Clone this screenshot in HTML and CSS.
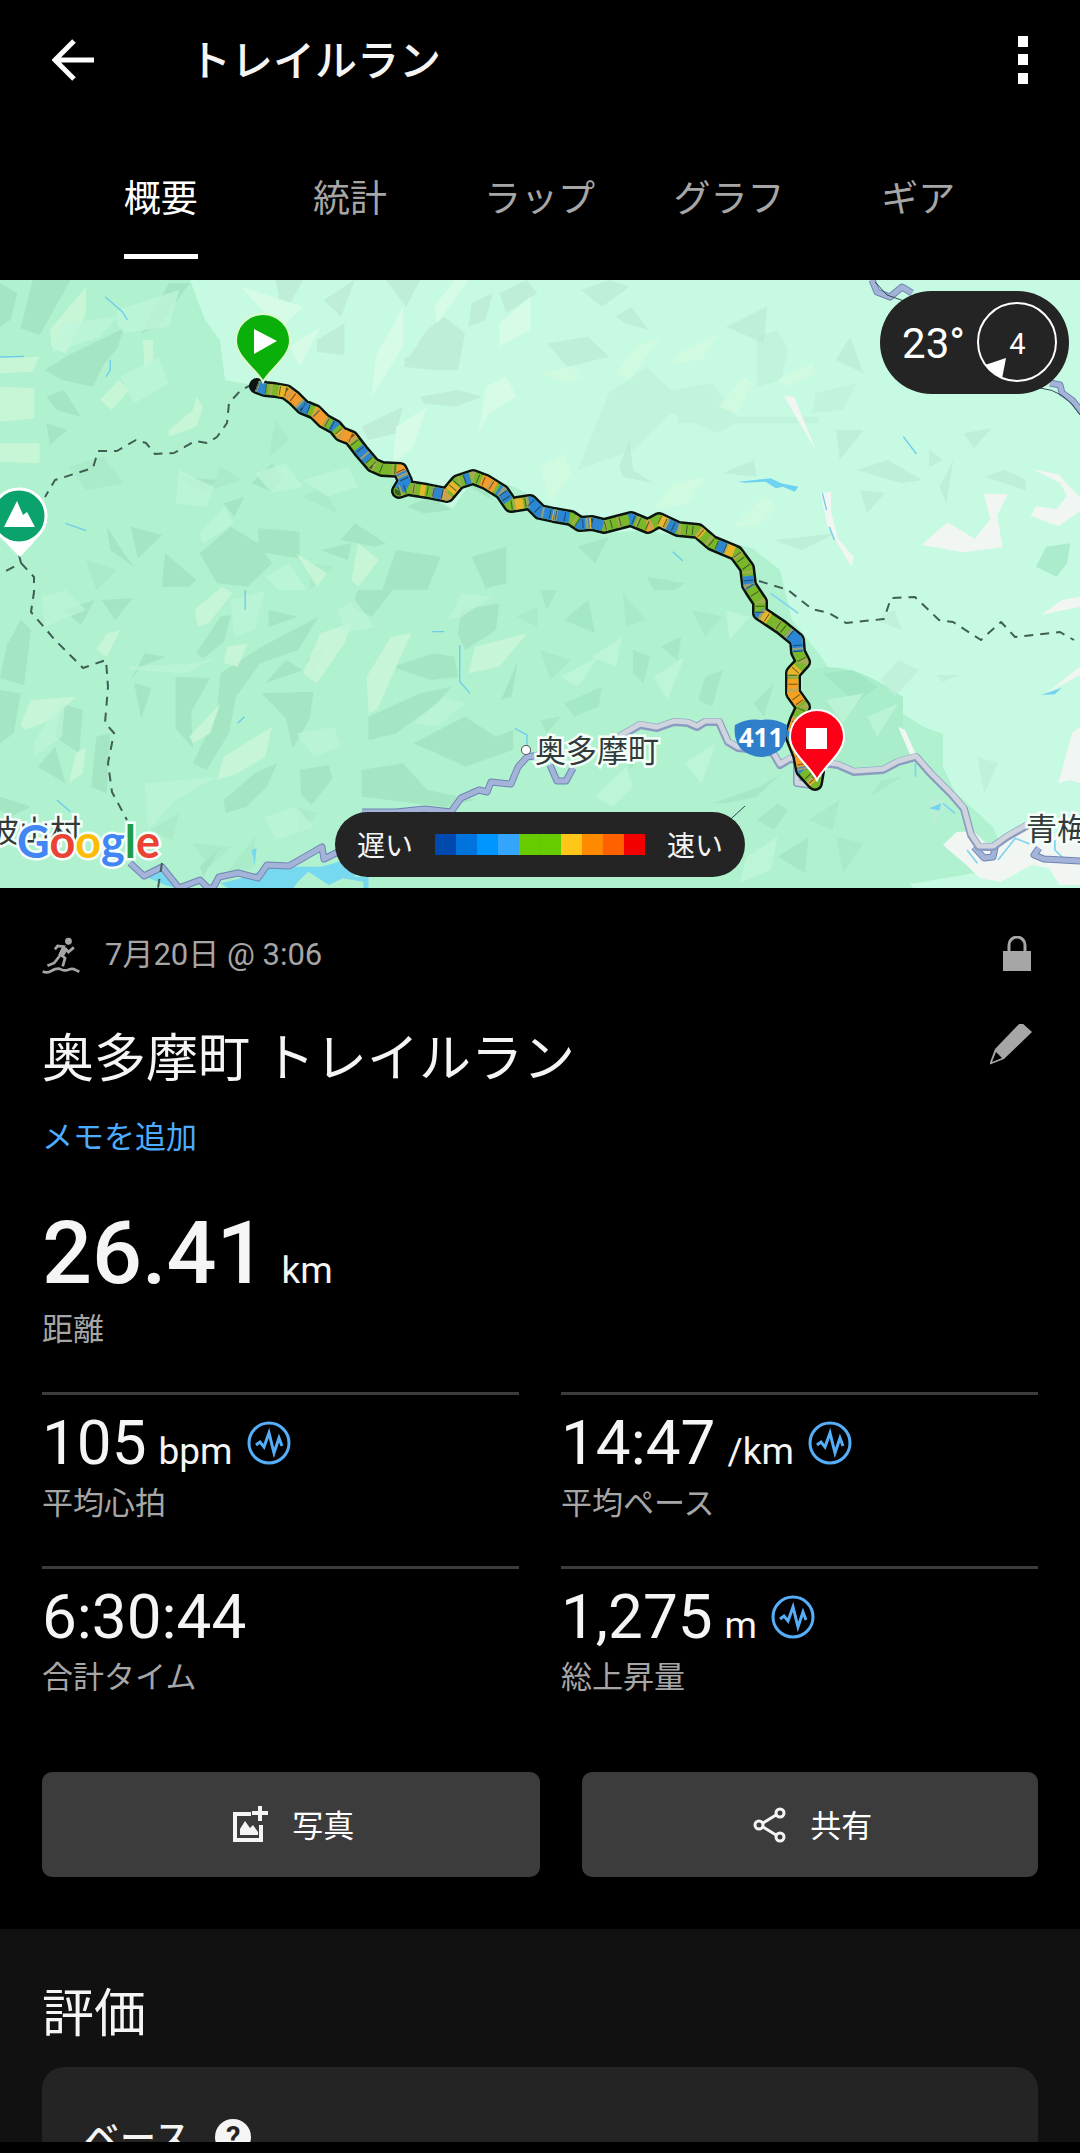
FILE: index.html
```html
<!DOCTYPE html>
<html lang="ja">
<head>
    <meta charset="UTF-8">
    <meta name="viewport" content="width=device-width, initial-scale=1.0">
    <title>トレイルラン</title>
    <link rel="stylesheet" href="styles.css">
</head>
<body>
    <!-- Iconos compartidos -->
    <svg class="sprite" aria-hidden="true">
        <symbol id="icon-pulse" viewBox="0 0 44 44">
            <circle cx="22" cy="22" r="20" fill="none" stroke="currentColor" stroke-width="3"/>
            <path d="M9 24l4-3 4 5 5-14 5 20 5-15 3 8" fill="none" stroke="currentColor" stroke-width="3"/>
        </symbol>
    </svg>

    <main class="screen">
        <header class="header">
            <button class="icon-button" aria-label="戻る">
                <svg width="42" height="42" viewBox="0 0 42 42"><path d="M22 2L3 21l19 19M3 21h39" fill="none" stroke="#fff" stroke-width="5"/></svg>
            </button>
            <h1>トレイルラン</h1>
            <button class="icon-button" aria-label="メニュー">
                <svg width="10" height="48" viewBox="0 0 10 48"><path d="M0 0h10v11H0zM0 18h10v11H0zM0 37h10v11H0z" fill="#fff"/></svg>
            </button>
        </header>

        <nav class="tabs">
            <a href="#" class="tab active"><span>概要</span></a>
            <a href="#" class="tab"><span>統計</span></a>
            <a href="#" class="tab"><span>ラップ</span></a>
            <a href="#" class="tab"><span>グラフ</span></a>
            <a href="#" class="tab"><span>ギア</span></a>
        </nav>

        <!-- Mapa -->
        <div class="map">
            <svg class="map-image" viewBox="0 0 1080 608" role="img" aria-label="ルートマップ">
                <rect width="1080" height="608" fill="#b0f1cf"/>
                <path fill="#c7fae2" d="M190 0l15 40 15 20 5 40 38 7 70 35 40 48 30 14 50 24 24-34 40 14 45 26 40 18 100 4 50 12 28 22 12 50 28 35 20 30 8 25 21-5 31 7 24 15 19 7v33l12 25 38 35 9 20-9 23-83 14 32 41h178V0z"/>
                <path fill="#a9edca" d="M803 392q26-10 57 1 24 10 43 24v33l12 25-19 5-15 8-29 2-29-7-20-33z"/>

                <!-- Relieve, cuadrante superior izquierdo -->
                <g transform="scale(.3444 .3333)">
                    <g fill="#9fe1bf" opacity=".7">
                        <path d="M95 0h110l-90 165-55-20zM0 10l50 30-20 80-30 20zM130 270l70-45 160-80-20 60-40 50-30 65-90-20zM135 350l50-20 50 80-70-20zM135 430l60 20-50 45zM490 10h60l-90 130-50 20zM520 590l110 10-40 40zM730 610l60-60 30 45-30 40zM650 670l60-20-30 60zM380 740l90 25-70 70zM310 740l50 80 30 40-70-50zM580 820l90-80 80 50 40 60-70 70-90-10zM750 745l120 10v80l-120-20zM480 820l90 80-20 20h-80zM1150 810l130 20-40 100h-130zM1030 730l90 60-30 10-100-20zM930 810l90-20-10 50zM1370 830l100-30v110l-60 15zM1330 600l40-30 60 90zM1180 680l70-30 60 40-80 10z"/>
                        <path d="M200 560l100-30 60 80-110 20zM880 650l60-30 40 80zM800 420l40 60-60 50zM640 560l60 40-90 30zM250 840l90 30-60 60zM900 850l70 10-70 70z" opacity=".5"/>
                    </g>
                    <g fill="#cbf7d8" opacity=".85">
                        <path d="M145 150L250 20v80l-60 120-40-20zM0 235l115-5-20 45-95 5zM0 320l100 5v90l-100 10zM0 490h115v60l-115-5zM415 180h30v60l-25 30zM290 360l55-60 30 30-50 60zM490 450l70-60 10-40 20 30-20 60-80 30zM1040 790l60 50-60 80-20-20zM860 820l90 60-30 40z"/>
                    </g>
                    <g fill="#c1f6dc">
                        <path d="M340 90l180-60-30 110-130 20-20-30zM520 570l100 50-20 60-90-10zM740 580l90-30 50 70-90 20zM580 760l70-80 30 50-90 60zM770 890l70-40 50 80h-80zM880 600l130-40 30 60-90 30zM180 130l160-20-50 60-140 50zM350 290l110-60 30 80-100 60z" opacity=".7"/>
                    </g>
                    <g fill="#bae8d3">
                        <path d="M800 0h80l-60 110zM920 180l80-50v95l-80-10zM940 60l90-60-40 110zM1240 150l50-40 60 50-20 110h-70l-90-10zM1170 240l60-40 50 30-100 20zM1220 350l110-20 70 20-80 30-90-10zM1450 40l80-40 30 40-90 60zM1050 440l120-60-20 80-80 20zM1370 70l60-30-20 80-50 20zM1120 0h100l-40 80z" opacity=".7"/>
                    </g>
                    <g fill="#d6fbe6">
                        <path d="M700 20l180 60-60 60-50-40zM1090 230l80-150v120l-90 150zM1410 320l60-30 30 60-80 50-30 60zM1150 440l90-60-40 120-60 50zM840 200l90-60-60 120zM1450 130l90-80v100l-90 50zM1260 80l60-80h40l-90 130z"/>
                    </g>
                    <path fill="none" stroke="#6fcdea" stroke-width="4" d="M305 50l50 45 15 25M0 231l70-2M320 240v30l-12 20M190 730l60 22"/>
                </g>
                <!-- Cuadrante superior derecho -->
                <g transform="translate(540 0) scale(.3444 .3333)">
                    <g fill="#baecd6">
                        <path d="M220 110l45-30 50 70-70-20zM120 30l60 50 80-60-60-20zM20 190l120-20 60 60-120 30zM540 140l120-60-10 110zM860 240l40-70 40 110zM1230 460l80-15-50 60zM230 560l30-80 10 90 60 40-90-20zM530 580l90-40 10 50zM680 780l180-20-100 50zM920 570l90-30 100 60-60 10zM1160 620l40-80-20 130zM1290 590l60-20 60 30v30zM300 900l90-20 60 50h-90zM860 450h80l-70 90zM930 630l70 10-50 60zM1130 510l40 30-40 20z" opacity=".75"/>
                        <path d="M200 340l110-80 70 70 120-20 80 110-60 40-140-60-110 110-160 60zM400 410h410v20H400zM630 170l60-20 30 60-20 90-70 20zM800 340l120-30-40 80-90 10z" opacity=".4"/>
                    </g>
                    <g fill="#d5fbe0">
                        <path d="M520 380l70-90 30 20-50 90zM690 300l100-50 10 30-90 40zM220 280l60-80 70-30-90 130zM0 280l90-20 30 30-40 20zM400 220l120-60-50 80-90 10zM0 560l70-40 20 60-60 90zM330 690l60-80 90-20-50 80zM560 740l90-90 40 30-60 60z" opacity=".7"/>
                    </g>
                    <path fill="#b0f1cf" d="M0 730l180 30 130-10 180 40 70 40 60 100H0z"/>
                    <path fill="#9fe1bf" d="M310 890l110 20-30 20h-60zM110 800l90-30-40 80z" opacity=".6"/>
                    <path fill="#abeccd" d="M1470 800l70-10-10 60-30 40-60-30z"/>
                    <!-- Zonas urbanas -->
                    <path fill="#f1f6f3" d="M708 348l30 2 65 165zM815 640l30-5v60l20 80 45 55-5 30-70-120zM1108 795l75-68 80 50 45-60-20-75h70l-30 65 15 95-115 15zM1430 568l75 15 45 50 20 20v40l-65 45-80-30 15-30 60 10 30-40-20-40z"/>
                    <path fill="#6fd2f1" d="M575 605l95-10 30 15 50 10-10 15-35-15-20 5-30-20-60 3z"/>
                    <path fill="none" stroke="#6fcdea" stroke-width="4" d="M1055 470l38 52M820 640l12 50M840 740l15 40M385 815l30 28"/>
                </g>
                <!-- Cuadrante inferior izquierdo -->
                <g transform="translate(0 310) scale(.3444 .3333)">
                    <g fill="#9fe1bf" opacity=".7">
                        <path d="M60 90l30 30-20 165-70-20 20-100zM0 300l60 10-20 120-40 30zM180 340l60 20-10 130-70-50zM185 60l90-30-40 75zM295 30l90-5-50 65zM280 440l40-10-10 180-45-20zM110 530l50-60 30 110zM380 270l40-80 60 10-70 30zM510 260l100 5-55 100 5 110-50-60zM390 280l50 15-30 90zM570 190l70-110 30-5-20 80-60 50zM640 250l120-80 165-90-60 100-110 40-70 100-20 110-65 110-40-20 70-150zM760 310l150-5-10 80-50 90-20-90zM780 60l85 20-85 30zM770 280l60-70 50 30zM650 630l90-80 65-30-30 70-60 60-60 20zM870 540l85-15 10 40-60 80-30-30zM1050 540l120-20 70 80 140 30-90 20-240-30zM1070 380l150-70 90-20-40 50-120 90-80 20zM1200 460l150-80 90 60 50-20v60l-140 50-60-30zM1140 230l120-40 60 10 10 60-80 10zM1340 60l110-20-10 80-90 60-20-50zM1040 0h100l-60 80-60-30zM890 210l60-50-40 80zM1455 330l50-120-20 110zM0 620l90 30-60 30-30-20zM580 830l60-60-50 90z"/>
                        <path d="M560 760l110 10-60 60zM650 860l90-120v90zM860 650l60 20-50 60zM440 720l80-50-20 80zM1500 80l60-30v60zM1240 660l80-20-30 40z" opacity=".5"/>
                    </g>
                    <g fill="#cdf6d8">
                        <path d="M565 60l80-70 30 20-70 90-30 10zM880 250l50-120 90-30-20 60-80 120zM1070 370l-5-110 70-120 60-10-40 90-60 140zM650 500l140-90-20 90-80 50-60 20zM60 400l30-70 130-10-70 70-80 30zM280 180l30-50 40-10-40 80zM1380 170l150-40-80 100-90 20zM660 170l60-10-30 70-40-10zM200 580l20-90 30-20-10 80zM550 440l90-100-30 90-50 30z" opacity=".8"/>
                    </g>
                    <g fill="#bef5d9">
                        <path d="M120 20l70-20 60 60-120 50zM370 230l200-10 60-20-90 50-160-10zM420 580l210-20-120 70-80 90zM670 30l100-30-30 120-60 20zM860 430l110-20 20 60-80 30zM1200 400l90-80 60 20-80 70zM770 680l90-30 50 60-110 40zM100 450l90-130-10 120-80 60zM1300 90l40-80 90 10-90 60zM980 60l50-30 60 80-90 20z" opacity=".7"/>
                    </g>
                    <path fill="#76d9f0" d="M640 880l80-20 60-30h150l40-10 50-20 10 60h40v45h-15v-30l-60-10-40 20-60-40-30 30-20 30-90-10-60 20zM410 855l50-20 50 60-30-10zM730 780l15-5-5 50z"/>
                    <path fill="none" stroke="#6fcdea" stroke-width="4" d="M712 0v60M1335 165v110l30 35M1255 125h35M690 400l20-20M165 630l40 35M1495 415l35 20v30"/>
                </g>
                <!-- Cuadrante inferior derecho -->
                <g transform="translate(540 310) scale(.3444 .3333)">
                    <g fill="#9fe3c1">
                        <path d="M70 90l70-60 20 100zM0 0h50l-30 60zM350 170l60-30-10 70zM480 260l50-20-30 110-40-20zM70 340l110-50-10 60-70 30zM0 390l60-10-40 50zM620 340l60-60-30 100zM270 180l50 20-20 80-30-30zM500 640l140-50 60-40-70 70-90 20zM630 690l60-50 30 20-40 60zM690 800l90-60-10 110zM820 250l90-10 70 50-60 50z" opacity=".6"/>
                        <path d="M240 10l70 80-60 20zM440 60l90 20-50 60zM230 430l90 40-60 70zM780 690l90-60-20 90zM0 180l90 30-60 60zM860 740l80 20-60 90zM960 620l90-60-60 10z" opacity=".4"/>
                    </g>
                    <g fill="#c3f6da">
                        <path d="M150 200l90-60-20 90zM160 620l90-90 20 60-60 60zM420 520l90-60-40 120zM540 60l70 20-60 70zM600 800l90-60-20 100-90 40zM830 330l110-20-60 90zM950 380l90-40-60 100zM330 260l90-60-50 130zM60 260l110-60-60 90z" opacity=".7"/>
                    </g>
                    <path fill="#bdeed8" d="M990 270l50-60 60 30-70 80zM1150 255h70l-50 20zM970 90l60-30 20 60zM1270 500l60 20-40 90zM1130 620l60 20-50 60z" opacity=".7"/>
                    <path fill="#f1f6f3" d="M1170 765l40-40h50l40 40 60-20 50-40 60 40 98-20v160h-60l-30-50-50-10-90 50-60-10-40-40zM1505 580l40-150 23-20v170l-30-10zM1455 75l60-45 53-10v30zM1470 310l98-80v25zM1040 410l20 10 30 70-15 5z"/>
                    <path fill="none" stroke="#7fd4ee" stroke-width="5" d="M670 10l80 60M1090 520v40M1240 780l30 40M1330 810l50-65 50 20M1495 750v30l30 30M1170 640l35 30"/>
                    <path fill="#74d4ef" d="M1130 655l35-15-5 22zM1455 315l60-22-20 20z"/>
                </g>

                <!-- Carreteras -->
                <g fill="none" stroke-linejoin="round">
                    <path stroke="#6f84b4" stroke-width="7" d="M130 583l14 13 18-9 17 21 21-8 8 8h5l6-11 19-4 20 5 9-13 22 1 33-19 2 12 16-8M362 532h34l29-3 26 3 10-14 18-8 8 2 4-10 20 2 7-17 9-10 12-2M550 485l7 16h9l7-13M872 0l5 12 13 5 12-10 10 6M1050 103l10 2 2 8 10 7 10 12M974 567l10 11 9-1 3-14M1039 568l-5 7 10 4 36 2"/>
                    <path stroke="#a3b4d8" stroke-width="5" d="M130 583l14 13 18-9 17 21 21-8 8 8h5l6-11 19-4 20 5 9-13 22 1 33-19 2 12 16-8M362 532h34l29-3 26 3 10-14 18-8 8 2 4-10 20 2 7-17 9-10 12-2M550 485l7 16h9l7-13M872 0l5 12 13 5 12-10 10 6M1050 103l10 2 2 8 10 7 10 12M974 567l10 11 9-1 3-14M1039 568l-5 7 10 4 36 2"/>
                    <path stroke="#8c9cc0" stroke-width="8" d="M619 457l21-12 17 3 17-6 14 1 9 4 8-5h14l9 20 10 6 19 2 16 3 7 12 10-6 48 6 16 7 29-2 15-8 18-5 15 17 21 21 12 14 7 26 8 12h14l14-10 21-12M797 480v23l15 2"/>
                    <path stroke="#cfd4df" stroke-width="5" d="M619 456l21-12 17 3 17-6 14 1 9 4 8-5h14l9 20 10 6 19 2 16 3 7 12 10-6 48 6 16 7 29-2 15-8 18-5 15 17 21 21 12 14 7 26 8 12h14l14-10 21-12M797 480v23l15 2"/>
                    <path stroke="#2f4b55" stroke-width="1" d="M875 2l12 13 17 6M1040 108q25 2 40 27M722 547l23-21"/>
                    <path stroke="#3f5e55" stroke-width="2" stroke-dasharray="9 7" d="M253 104l-12 6-12 13-2 20-10 14-10 6-12-2-21 12-19 1-9-11-10-3-19 11H98l-5 17-38 12-10 17M19 275l2 8-21 11M21 283l13 14v15l-3 20 24 28 28 28 23-8 2 27-3 36 9 10-6 30 4 29 15 28M162 583l-4 25M759 301l29 9 24 19 17 4 17 10 38-4 7-21 24-1 24 23 14 2 28 18 20-18 14 15 45-5 14 8"/>
                </g>

                <!-- Ruta -->
                <defs>
                    <path id="route" d="M257 106l8 3 10 1 11 2 8 6 9 9 12 5 9 9 11 6 6 7 10 4 10 13 12 14 9 4 18 1 5 11-6 10 9-3 19 3 20 4 11-13 15-5 13 5 16 10 9 13 19-3 10 10 14 3 17 3 9 6 12-1 12 3 27-7 17 7 11-6 19 9 20 2 14 12 24 10 11 15 2 17 3 5 8 12v11l21 14 16 13 1 12 5 10-10 11v20l10 14-6 13-5 15 8 20 3 15 12 13 2-12"/>
                </defs>
                <g fill="none" stroke-linejoin="round">
                    <use href="#route" stroke="#0b1410" stroke-width="16" stroke-linecap="round"/>
                    <use href="#route" stroke="#79b82a" stroke-width="11"/>
                    <use href="#route" stroke="#2f86cf" stroke-width="11" stroke-dasharray="9 38 12 27 6 31 16 45"/>
                    <use href="#route" stroke="#e8b62a" stroke-width="11" stroke-dasharray="0 22 8 34 5 27 9 50"/>
                    <use href="#route" stroke="#f59a2c" stroke-width="11" stroke-dasharray="0 30 17 18 14 20 16 55 12 60 6 40 16 170 5 230"/>
                    <use href="#route" stroke="#2a86d6" stroke-width="11" stroke-dasharray="0 176 20 148 26 5 16 10 12 260 24 300"/>
                    <use href="#route" stroke="#f5a020" stroke-width="11" stroke-dasharray="0 729 26 900"/>
                    <use href="#route" stroke="#b3a85f" stroke-width="11" stroke-dasharray="2 11 3 17" opacity=".8"/>
                    <use href="#route" stroke="#10241c" stroke-width="9" stroke-dasharray="1 8 1 13 1 5" opacity=".6"/>
                </g>

                <!-- Etiquetas del mapa -->
                <g class="map-label">
                    <circle cx="526" cy="470" r="4" fill="#fff" stroke="#555" stroke-width="2"/>
                    <text x="535" y="482">奥多摩町</text>
                    <text x="1026" y="560">青梅</text>
                    <text x="-12" y="562">波山村</text>
                </g>
                <path fill="#2f7fcb" d="M735 445q13-7 26-5 13-2 26 5 1 16-7 25-10 7-19 7-10 0-20-8-8-10-6-24z"/>
                <text class="road-number" x="761" y="467">411</text>

                <!-- Marcadores -->
                <path fill="#fff" d="M-9 237a28 28 0 1 1 56 0c0 13-14 26-27 40-14-14-29-27-29-40z"/>
                <circle cx="19" cy="236" r="27" fill="#0ba36c" stroke="#fff" stroke-width="3"/>
                <path fill="#fff" d="M4 247l13-26 6 14 4-3 8 15z"/>
                <path fill="#0aaf0a" stroke="#dcfacb" stroke-width="2" d="M263 102c-6-12-27-25-27-41a27 27 0 0 1 54 0c0 16-21 29-27 41z"/>
                <path fill="#fff" d="M254 49v25l23-13z"/>
                <path fill="#fb0017" stroke="#fff" stroke-width="2" d="M817 500c-7-14-27-27-27-43a27 27 0 0 1 54 0c0 16-20 29-27 43z"/>
                <path fill="#fff" d="M806 448h21v21h-21z"/>

                <text class="google" x="17" y="578"><tspan fill="#4285f4">G</tspan><tspan fill="#ea4335">o</tspan><tspan fill="#fbbc05">o</tspan><tspan fill="#4285f4">g</tspan><tspan fill="#1e9c48">l</tspan><tspan fill="#ea4335">e</tspan></text>
            </svg>

            <div class="weather">
                <span class="temperature">23°</span>
                <div class="wind">
                    <svg viewBox="0 0 81 81">
                        <circle cx="40" cy="40" r="39" fill="none" stroke="#fff" stroke-width="2"/>
                        <path d="M8 63l21-7-4 21z" fill="#fff"/>
                    </svg>
                    <span>4</span>
                </div>
            </div>

            <div class="legend">
                <span>遅い</span>
                <div class="scale">
                    <i class="c1"></i><i class="c2"></i><i class="c3"></i><i class="c4"></i><i class="c5"></i><i class="c5"></i><i class="c6"></i><i class="c7"></i><i class="c8"></i><i class="c9"></i>
                </div>
                <span>速い</span>
            </div>
        </div>

        <!-- Resumen -->
        <section class="summary">
            <div class="row date">
                <svg width="38" height="37" viewBox="44 44 112 108">
                    <circle cx="122" cy="56" r="10" fill="#a6a6a6"/>
                    <path d="M82 80l8-10 18 2-10 22 14 12-7 24M97 98L80 120l-20 8M112 76l10 12 16-14" fill="none" stroke="#a6a6a6" stroke-width="8"/>
                    <path d="M106 68l-14 28 14 8 14-24z" fill="#a6a6a6"/>
                    <path d="M46 145q14 6 26-2 18-10 28-4 12 6 24 0 10-4 20 2l10 5" fill="none" stroke="#a6a6a6" stroke-width="8"/>
                </svg>
                <span>7月20日 @ 3:06</span>
                <button class="icon-button push" aria-label="プライバシー">
                    <svg width="42" height="38" viewBox="0 0 42 38"><path d="M7 15h28v20H7z" fill="#a6a6a6"/><path d="M13 16V9a8 8 0 0 1 16 0v7" fill="none" stroke="#a6a6a6" stroke-width="3"/></svg>
                </button>
            </div>
            <div class="row title">
                <h2>奥多摩町 トレイルラン</h2>
                <button class="icon-button push" aria-label="編集">
                    <svg width="48" height="48" viewBox="2 2 48 48"><path d="M33 0l11 10-28 27-15 6 6-16z" fill="#a6a6a6"/><path d="M8 30l-4 10 10-4z" fill="#000"/></svg>
                </button>
            </div>
            <a href="#" class="note">メモを追加</a>

            <div class="distance">
                <div class="value">26.41<span class="unit">km</span></div>
                <div class="label">距離</div>
            </div>

            <div class="stats">
                <div class="stat">
                    <div class="value">105<span class="unit">bpm</span><svg class="pulse"><use href="#icon-pulse"/></svg></div>
                    <div class="label">平均心拍</div>
                </div>
                <div class="stat">
                    <div class="value">14:47<span class="unit">/km</span><svg class="pulse"><use href="#icon-pulse"/></svg></div>
                    <div class="label">平均ペース</div>
                </div>
                <div class="stat">
                    <div class="value">6:30:44</div>
                    <div class="label">合計タイム</div>
                </div>
                <div class="stat">
                    <div class="value">1,275<span class="unit">m</span><svg class="pulse"><use href="#icon-pulse"/></svg></div>
                    <div class="label">総上昇量</div>
                </div>
            </div>

            <div class="actions">
                <button class="action photo">
                    <svg width="38" height="38" viewBox="0 0 38 38" fill="none" stroke="#f5f5f5" stroke-width="4"><path d="M19 8H3v26h26V19"/><path d="M28 0v15M20 7h16"/><path d="M8 29v-6l5-8 5 7 3-3 5 7v3z" fill="#f5f5f5" stroke="none"/></svg>
                    <span>写真</span>
                </button>
                <button class="action share">
                    <svg width="36" height="38" viewBox="0 0 36 38" fill="none" stroke="#f5f5f5" stroke-width="3"><circle cx="7" cy="19" r="4"/><circle cx="28" cy="7" r="4"/><circle cx="28" cy="31" r="4"/><path d="M11 17l13-8M11 21l13 8"/></svg>
                    <span>共有</span>
                </button>
            </div>
        </section>

        <section class="rating">
            <h2>評価</h2>
            <div class="card">
                <h3>ベース</h3>
                <button class="help" aria-label="ヘルプ">?</button>
            </div>
        </section>
    </main>
    <footer class="bottom-bar"></footer>
</body>
</html>
```
FILE: styles.css
```css
* {
    box-sizing: border-box;
}
body {
    margin: 0;
    height: 100vh;
    display: flex;
    flex-direction: column;
    background-color: #000000;
    color: #f5f5f5;
    font-family: Roboto, "Noto Sans CJK JP", sans-serif;
    font-size: 31px;
    line-height: 44px;
}
h1, h2, h3 {
    margin: 0;
    font-weight: 400;
}
svg {
    display: block;
}
a {
    text-decoration: none;
}
button {
    font: inherit;
    color: inherit;
    border: none;
    padding: 0;
    cursor: pointer;
}
.sprite {
    position: absolute;
    width: 0;
    height: 0;
}
.screen {
    flex: 1;
    min-height: 0;
    overflow: hidden;
}
.bottom-bar {
    height: 11px;
}
.icon-button {
    background: none;
}
.push {
    margin-left: auto;
}

/* Cabecera */
.header {
    display: flex;
    align-items: center;
    height: 120px;
    padding: 0 52px;
}
.header h1 {
    flex: 1;
    margin-left: 95px;
    padding-top: 4px;
    font-size: 42px;
    font-weight: 500;
}
.tabs {
    display: flex;
    padding: 55px 67px 21px 66px;
}
.tab {
    flex: 1;
    text-align: center;
    font-size: 37px;
    line-height: 50px;
    color: #a6a6a6;
}
.tab span {
    display: inline-block;
    padding-bottom: 29px;
    border-bottom: 5px solid transparent;
    vertical-align: top;
}
.tab.active {
    color: #ffffff;
}
.tab.active span {
    border-color: #ffffff;
}

/* Mapa */
.map {
    position: relative;
}
.map-image {
    width: 100%;
    height: auto;
}
.map-label {
    font-size: 31px;
    fill: #333a3a;
    stroke: #f4fffa;
    stroke-width: 5px;
    paint-order: stroke;
}
.road-number {
    font-family: "Noto Sans", sans-serif;
    font-size: 26px;
    font-weight: 700;
    text-anchor: middle;
    fill: #ffffff;
}
.google {
    font-family: Lato, sans-serif;
    font-size: 45px;
    font-weight: 700;
    stroke: #f4fffa;
    stroke-width: 5px;
    paint-order: stroke;
}
.weather {
    position: absolute;
    top: 11px;
    right: 11px;
    display: flex;
    align-items: center;
    gap: 12px;
    height: 103px;
    padding: 0 11px 0 22px;
    border-radius: 52px;
    background-color: #242424;
    color: #ffffff;
}
.temperature {
    padding-top: 2px;
    font-size: 42px;
}
.wind {
    display: grid;
    place-items: center;
    font-size: 29px;
}
.wind svg, .wind span {
    grid-area: 1 / 1;
}
.wind span {
    padding-top: 2px;
}
.wind svg {
    width: 81px;
    height: 81px;
}
.legend {
    position: absolute;
    bottom: 11px;
    left: 50%;
    transform: translateX(-50%);
    display: flex;
    align-items: center;
    gap: 22px;
    height: 65px;
    padding: 0 22px;
    border-radius: 33px;
    background-color: #242424;
    font-size: 28px;
    white-space: nowrap;
}
.legend span, .action span {
    padding-top: 4px;
}
.scale {
    display: flex;
}
.scale i {
    width: 21px;
    height: 21px;
}
.c1 { background-color: #0049ae; }
.c2 { background-color: #0074dc; }
.c3 { background-color: #0096ff; }
.c4 { background-color: #35a5fb; }
.c5 { background-color: #66cc00; }
.c6 { background-color: #ffc61a; }
.c7 { background-color: #ff8a00; }
.c8 { background-color: #ff6000; }
.c9 { background-color: #f20000; }

/* Resumen */
.summary {
    padding: 45px 42px 52px;
}
.row {
    display: flex;
    align-items: center;
}
.date {
    color: #a6a6a6;
    gap: 25px;
}
.title {
    align-items: flex-start;
    margin: 47px 0 20px;
}
.title h2, .rating h2 {
    font-size: 52px;
    line-height: 72px;
}
.note {
    display: block;
    color: #4dacff;
}
.value {
    display: flex;
    align-items: baseline;
    font-size: 62px;
    line-height: 64px;
}
.unit {
    margin-left: 12px;
    font-size: 37px;
    line-height: 44px;
}
.label {
    margin-top: 7px;
    color: #a6a6a6;
}
.pulse {
    align-self: center;
    width: 44px;
    height: 44px;
    margin-left: 14px;
    color: #56aef8;
}
.distance {
    margin: 49px 0 40px;
}
.distance .value {
    font-size: 88px;
    font-weight: 500;
    line-height: 88px;
}
.distance .unit {
    margin-left: 15px;
    font-weight: 400;
}
.distance .label {
    margin-top: 11px;
}
.stats {
    display: grid;
    grid-template-columns: 1fr 1fr;
    column-gap: 42px;
}
.stat {
    padding: 16px 0 40px;
    border-top: 3px solid #3c3c3c;
}
.actions {
    display: flex;
    gap: 42px;
    margin-top: 32px;
}
.action {
    display: flex;
    align-items: center;
    justify-content: center;
    gap: 22px;
    height: 105px;
    padding-left: 5px;
    border-radius: 10px;
    background-color: #3c3c3c;
    color: #ffffff;
}
.photo {
    flex: 12;
}
.share {
    flex: 11;
}

/* Evaluación */
.rating {
    padding: 50px 42px;
    background-color: #111111;
}
.card {
    display: flex;
    align-items: center;
    gap: 25px;
    margin-top: 16px;
    padding: 42px;
    border-radius: 22px;
    background-color: #242424;
}
.card h3 {
    padding-top: 4px;
    font-size: 36px;
    font-weight: 500;
    line-height: 52px;
}
.help {
    width: 36px;
    height: 36px;
    border-radius: 50%;
    background-color: #f5f5f5;
    color: #242424;
    font-size: 29px;
    font-weight: 700;
    line-height: 36px;
}
```
